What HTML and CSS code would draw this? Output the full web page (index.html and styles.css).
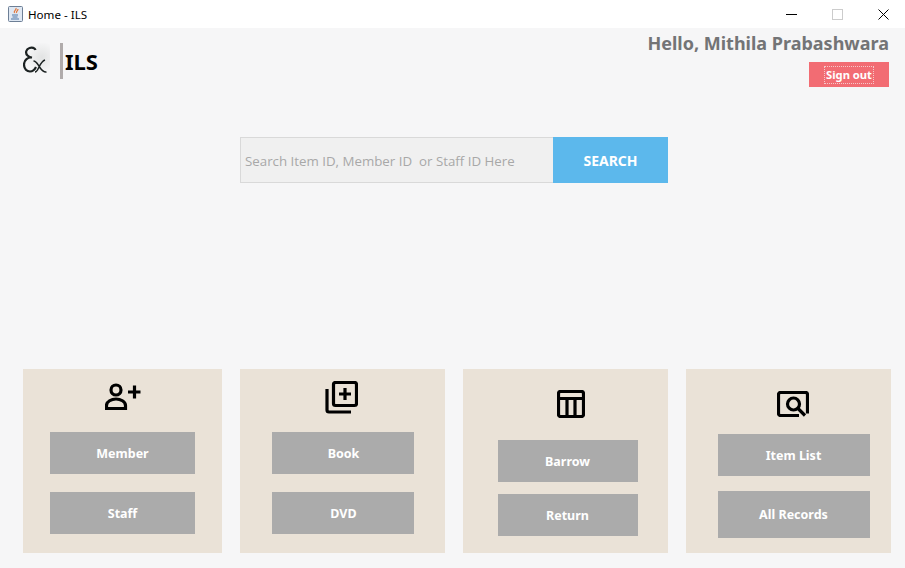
FILE: index.html
```html
<!DOCTYPE html>
<html lang="en">
<head>
  <meta charset="UTF-8" />
  <title>Home - ILS</title>
  <link rel="stylesheet" href="styles.css">
</head>
<body>
  <div class="titlebar">
    <svg class="app-icon" width="15" height="16" viewBox="0 0 15 16">
      <rect x="0.5" y="0.5" width="14" height="15" rx="1" fill="#dfe8f3" stroke="#6d7f96"/>
      <path d="M8 2c1 2-3 3-1.500 5M10 3c0 2-2 2-1.500 4" fill="none" stroke="#e2763a" stroke-width="1.200"/>
      <path d="M4 9h6M4.500 11h5M3 13h8" stroke="#4f76a8" stroke-width="1.100"/>
    </svg>
    <span class="window-title">Home - ILS</span>
    <div class="window-buttons">
      <svg width="11" height="11" viewBox="0 0 11 11"><path d="M0 5.500h11" stroke="#000"/></svg>
      <svg width="11" height="11" viewBox="0 0 11 11"><rect x="0.500" y="0.500" width="10" height="10" fill="none" stroke="#ccc"/></svg>
      <svg width="11" height="11" viewBox="0 0 11 11"><path d="M0.500 0.500l10 10M10.500 0.500l-10 10" stroke="#000"/></svg>
    </div>
  </div>

  <div class="main">
    <div class="header">
      <div class="logo">
        <svg class="logo-mark" width="27" height="36" viewBox="0 0 27 36" fill="none" stroke="#1c2222">
          <path d="M12.500 7C12 5 9 4 6.500 5C3 6 2 10 4.500 12.500C6 14 8 14.500 9 14.500C5 14 1 17 1 21.500C1 26 4 28.500 7 28.500C10 28.500 12 26 13 24" stroke-width="2.200"/>
          <path d="M10.500 18c3 0 4 3 6 6s4 5.500 7 5M22 17c-3 1-5 5-6 7s-2 5-4 5" stroke-width="1.500"/>
        </svg>
        <div class="logo-name">ILS</div>
      </div>
      <div class="user">
        <div class="hello">Hello, Mithila Prabashwara</div>
        <button class="signout"><span>Sign out</span></button>
      </div>
    </div>

    <div class="search">
      <input class="search-input" type="text" placeholder="Search Item ID, Member ID  or Staff ID Here">
      <button class="search-btn">SEARCH</button>
    </div>

    <div class="cards">
      <div class="card card-member">
        <svg class="icon" width="36" height="28" viewBox="0 0 36 28" fill="none" stroke="#000" stroke-width="3.200">
          <circle cx="11" cy="7" r="5"/>
          <path d="M1.500 25.500v-3c0-4 5-6.500 9.500-6.500s9.500 2.500 9.500 6.500v3z"/>
          <path d="M23 9h12.500M29.500 2.500v13"/>
        </svg>
        <button class="btn">Member</button>
        <button class="btn">Staff</button>
      </div>
      <div class="card card-item">
        <svg class="icon" width="33" height="33" viewBox="0 0 33 33" fill="none" stroke="#000" stroke-width="3.200">
          <rect x="8.500" y="1.500" width="23" height="23" rx="2"/>
          <path d="M2 8v21a2 2 0 0 0 2 2h22"/>
          <path d="M14 13h12M20 7v12"/>
        </svg>
        <button class="btn">Book</button>
        <button class="btn">DVD</button>
      </div>
      <div class="card card-lend">
        <svg class="icon" width="28" height="28" viewBox="0 0 28 28" fill="none" stroke="#000" stroke-width="3.200">
          <rect x="1.500" y="1.500" width="25" height="25" rx="2"/>
          <path d="M1.500 8.500h25M10 8.500v18M18 8.500v18"/>
        </svg>
        <button class="btn">Barrow</button>
        <button class="btn">Return</button>
      </div>
      <div class="card card-list">
        <svg class="icon" width="32" height="26" viewBox="0 0 32 26" fill="none" stroke="#000" stroke-width="3.200">
          <path d="M22 24.500H3.500a2 2 0 0 1-2-2v-19a2 2 0 0 1 2-2h25a2 2 0 0 1 2 2v19"/>
          <circle cx="16.500" cy="13" r="6"/>
          <path d="M21 17.500l7 7"/>
        </svg>
        <button class="btn">Item List</button>
        <button class="btn btn-tall">All Records</button>
      </div>
    </div>
  </div>
</body>
</html>
```

FILE: styles.css
```css
html, body {
  margin: 0;
  height: 100%;
}

body {
  background-color: #f6f6f7;
  font-family: "Noto Sans", "Open Sans", sans-serif;
  display: flex;
  flex-direction: column;
  overflow: hidden;
}

button {
  font-family: inherit;
  border: none;
  padding: 0;
}

.titlebar {
  height: 28px;
  flex-shrink: 0;
  background-color: #fff;
  display: flex;
  align-items: center;
  padding: 0 16px 0 8px;
}

.app-icon {
  margin-right: 5px;
}

.window-title {
  font-size: 11.600px;
  color: #000;
}

.window-buttons {
  margin-left: auto;
  display: flex;
  gap: 35px;
}

.main {
  flex: 1;
  display: flex;
  flex-direction: column;
  padding: 0 14px 15px 23px;
}

.header {
  display: flex;
  justify-content: space-between;
  height: 59px;
}

.logo {
  display: flex;
  align-items: center;
  height: 36px;
  margin-top: 15px;
}

.logo-mark {
  background: radial-gradient(circle at 70% 40%, #e2e3e3 0, #f6f6f7 55%);
}

.logo-name {
  margin-left: 10px;
  padding-left: 2px;
  border-left: 3px solid #b0abab;
  height: 36px;
  line-height: 36px;
  font-size: 22px;
  font-weight: 700;
  color: #000;
}

.user {
  display: flex;
  flex-direction: column;
  align-items: flex-end;
  padding-right: 2px;
}

.hello {
  margin-top: 2px;
  font-size: 18px;
  line-height: 26px;
  font-weight: 700;
  color: #737476;
}

.signout {
  margin-top: 6px;
  width: 80px;
  height: 25px;
  background-color: #f26c73;
  color: #fff;
  font-size: 11.200px;
  font-weight: 700;
  display: flex;
  align-items: center;
  justify-content: center;
}

.signout span {
  border: 1px dotted #f5c9cb;
  padding: 0 1px;
  line-height: 16px;
}

.search {
  display: flex;
  margin: 50px 0 0 217px;
  height: 46px;
}

.search-input {
  width: 313px;
  box-sizing: border-box;
  border: 1px solid #d9d9d9;
  border-right: none;
  background-color: #f0f0f0;
  padding: 1px 4px 0;
  font-family: "Open Sans", sans-serif;
  font-size: 13.300px;
  outline: none;
}

.search-input::placeholder {
  color: #a8a8a8;
  opacity: 1;
}

.search-btn {
  width: 115px;
  background-color: #5cb8ec;
  color: #fff;
  font-size: 14px;
  font-weight: 700;
}

.cards {
  margin-top: auto;
  display: flex;
  gap: 18px;
  height: 184px;
}

.card {
  box-sizing: border-box;
  width: 205px;
  background-color: #eae2d7;
  display: flex;
  flex-direction: column;
  align-items: center;
}

.btn {
  height: 42px;
  flex-shrink: 0;
  background-color: #ababab;
  color: #fff;
  font-size: 12.500px;
  font-weight: 700;
}

.card-member {
  width: 199px;
  padding-top: 14px;
}

.card-member .icon {
  margin-bottom: 21px;
}

.card-member .btn {
  width: 145px;
}

.card-member .btn + .btn,
.card-item .btn + .btn {
  margin-top: 18px;
}

.card-item {
  padding-top: 12px;
}

.card-item .icon {
  margin-bottom: 18px;
  margin-left: -3px;
}

.card-item .btn {
  width: 142px;
  padding-left: 2px;
}

.card-lend {
  padding-top: 21px;
}

.card-lend .icon {
  margin-left: 11px;
  margin-bottom: 22px;
}

.card-lend .btn {
  width: 140px;
  margin-left: 4px;
}

.card-lend .btn + .btn {
  margin-top: 12px;
}

.card-list {
  padding-top: 22px;
}

.card-list .icon {
  margin-left: 8px;
  margin-bottom: 17px;
}

.card-list .btn {
  width: 152px;
  margin-left: 10px;
}

.card-list .btn + .btn {
  margin-top: 15px;
}

.card-list .btn-tall {
  height: 47px;
}
```
